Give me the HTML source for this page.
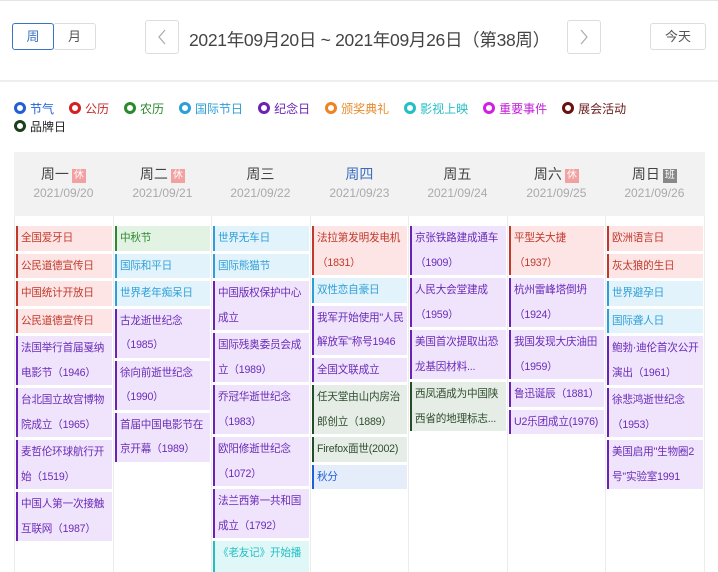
<!DOCTYPE html>
<html><head><meta charset="utf-8"><style>
*{box-sizing:border-box;margin:0;padding:0}
html,body{width:718px;height:572px;overflow:hidden}
body{background:#fff;font-family:"Liberation Sans","Noto Sans CJK SC",sans-serif;position:relative;color:#333}
.top{position:absolute;left:0;top:0;width:718px;height:1px;background:#e4e4e4}
.btn{position:absolute;border:1px solid #ddd;border-radius:3px;background:#fff;font-size:13px;color:#555;text-align:center}
.sep{position:absolute;left:0;top:80px;width:718px;height:2px;background:#eee}
.title{position:absolute;left:189px;top:27px;font-size:17.5px;color:#444;letter-spacing:-0.3px}
.legend{position:absolute;left:14px;top:100px;width:700px;font-size:12px;line-height:18px}
.legend span{display:inline-block;margin-right:15px}
.legend i{display:inline-block;width:12px;height:12px;border-radius:50%;border:3.5px solid;vertical-align:-1px;margin-right:4px;background:#fff}
.hdr{position:absolute;left:14px;top:152px;width:691px;height:64px;background:#f2f2f2}
.col{position:absolute;top:216px;height:356px;border-left:1px solid #ececec}
.h{position:absolute;top:152px;text-align:center;width:98.7px}
.h b{display:block;font-weight:normal;font-size:14px;color:#444;margin-top:12px;height:20px}
.h em{font-style:normal;display:block;font-size:12px;color:#aaa;margin-top:2px}
.bd{display:inline-block;font-size:10px;color:#fff;background:#f2a0a0;padding:0 2px;line-height:14px;margin-left:3px;vertical-align:1px}
.e{margin:0 1px 3px 1px;border-left:2px solid;font-size:10.6px;line-height:24.5px;padding-left:3px;white-space:nowrap;overflow:hidden;letter-spacing:-0.2px}
.r{background:#fde5e5;border-color:#c0392b;color:#c0392b}
.g{background:#e3f3e3;border-color:#2c8a2c;color:#2c8a2c}
.c{background:#e2f3fb;border-color:#2d9fd8;color:#2d9fd8}
.p{background:#efe4fb;border-color:#6a22b6;color:#6a2ab8}
.d{background:#e6ede6;border-color:#254d25;color:#2d4d2d}
.b{background:#e5edfb;border-color:#2060d6;color:#2060d6}
.t{background:#e0f7f8;border-color:#22bfc4;color:#22bfc4}
</style></head><body>
<div class="top"></div>
<div class="btn" style="left:12px;top:23px;width:42px;height:27px;line-height:25px;border-color:#3b73c4;color:#3b73c4;z-index:2">周</div>
<div class="btn" style="left:53px;top:23px;width:43px;height:27px;line-height:25px">月</div>
<div class="btn" style="left:145px;top:20px;width:34px;height:34px"><svg width="32" height="32" viewBox="0 0 32 32"><path d="M19 9 L13 16 L19 23" fill="none" stroke="#aaa" stroke-width="1.2"/></svg></div>
<div class="title">2021年09月20日 ~ 2021年09月26日（第38周）</div>
<div class="btn" style="left:567px;top:20px;width:34px;height:34px"><svg width="32" height="32" viewBox="0 0 32 32"><path d="M13 9 L19 16 L13 23" fill="none" stroke="#aaa" stroke-width="1.2"/></svg></div>
<div class="btn" style="left:650px;top:23px;width:56px;height:27px;line-height:25px">今天</div>
<div class="sep"></div>
<div class="legend">
<span style="color:#2060d6"><i style="border-color:#2060d6"></i>节气</span><span style="color:#c62828"><i style="border-color:#d32020"></i>公历</span><span style="color:#2c8a2c"><i style="border-color:#2c8a2c"></i>农历</span><span style="color:#2d9fd8"><i style="border-color:#2d9fd8"></i>国际节日</span><span style="color:#6a22b6"><i style="border-color:#6a22b6"></i>纪念日</span><span style="color:#e88a2a"><i style="border-color:#ef8320"></i>颁奖典礼</span><span style="color:#22bfc4"><i style="border-color:#22bfc4"></i>影视上映</span><span style="color:#c020d8"><i style="border-color:#d020e0"></i>重要事件</span><span style="color:#6a1a1a;margin-right:0"><i style="border-color:#6a1010"></i>展会活动</span><br><span style="color:#222"><i style="border-color:#1a3f1a"></i>品牌日</span>
</div>
<div class="hdr"></div>
<div class="h" style="left:14px"><b>周一<span class="bd">休</span></b><em>2021/09/20</em></div>
<div class="h" style="left:113px"><b>周二<span class="bd">休</span></b><em>2021/09/21</em></div>
<div class="h" style="left:211px"><b>周三</b><em>2021/09/22</em></div>
<div class="h" style="left:310px"><b style="color:#3b6cc0">周四</b><em>2021/09/23</em></div>
<div class="h" style="left:408px"><b>周五</b><em>2021/09/24</em></div>
<div class="h" style="left:507px"><b>周六<span class="bd">休</span></b><em>2021/09/25</em></div>
<div class="h" style="left:605px"><b>周日<span class="bd" style="background:#888">班</span></b><em>2021/09/26</em></div>

<div class="col" style="left:14px;width:99px;padding-top:10px">
<div class="e r">全国爱牙日</div><div class="e r">公民道德宣传日</div><div class="e r">中国统计开放日</div><div class="e r">公民道德宣传日</div>
<div class="e p">法国举行首届戛纳<br>电影节（1946）</div><div class="e p">台北国立故宫博物<br>院成立（1965）</div><div class="e p">麦哲伦环球航行开<br>始（1519）</div><div class="e p">中国人第一次接触<br>互联网（1987）</div>
</div>
<div class="col" style="left:113px;width:98px;padding-top:10px">
<div class="e g">中秋节</div><div class="e c">国际和平日</div><div class="e c">世界老年痴呆日</div>
<div class="e p">古龙逝世纪念<br>（1985）</div><div class="e p">徐向前逝世纪念<br>（1990）</div><div class="e p">首届中国电影节在<br>京开幕（1989）</div>
</div>
<div class="col" style="left:211px;width:99px;padding-top:10px">
<div class="e c">世界无车日</div><div class="e c">国际熊猫节</div>
<div class="e p">中国版权保护中心<br>成立</div><div class="e p">国际残奥委员会成<br>立（1989）</div><div class="e p">乔冠华逝世纪念<br>（1983）</div><div class="e p">欧阳修逝世纪念<br>（1072）</div><div class="e p">法兰西第一共和国<br>成立（1792）</div><div class="e t">《老友记》开始播<br>&nbsp;</div>
</div>
<div class="col" style="left:310px;width:98px;padding-top:10px">
<div class="e r">法拉第发明发电机<br>（1831）</div><div class="e c">双性恋自豪日</div><div class="e p">我军开始使用"人民<br>解放军"称号1946</div><div class="e p">全国文联成立</div>
<div class="e d">任天堂由山内房治<br>郎创立（1889）</div><div class="e d">Firefox面世(2002)</div><div class="e b">秋分</div>
</div>
<div class="col" style="left:408px;width:99px;padding-top:10px">
<div class="e p">京张铁路建成通车<br>（1909）</div><div class="e p">人民大会堂建成<br>（1959）</div><div class="e p">美国首次提取出恐<br>龙基因材料...</div><div class="e d">西凤酒成为中国陕<br>西省的地理标志...</div>
</div>
<div class="col" style="left:507px;width:98px;padding-top:10px">
<div class="e r">平型关大捷<br>（1937）</div><div class="e p">杭州雷峰塔倒坍<br>（1924）</div><div class="e p">我国发现大庆油田<br>（1959）</div><div class="e p">鲁迅诞辰（1881）</div><div class="e p">U2乐团成立(1976)</div>
</div>
<div class="col" style="left:605px;width:100px;padding-top:10px;border-right:1px solid #ececec">
<div class="e r">欧洲语言日</div><div class="e r">灰太狼的生日</div><div class="e c">世界避孕日</div><div class="e c">国际聋人日</div>
<div class="e p">鲍勃·迪伦首次公开<br>演出（1961）</div><div class="e p">徐悲鸿逝世纪念<br>（1953）</div><div class="e p">美国启用"生物圈2<br>号"实验室1991</div>
</div>
</body></html>
